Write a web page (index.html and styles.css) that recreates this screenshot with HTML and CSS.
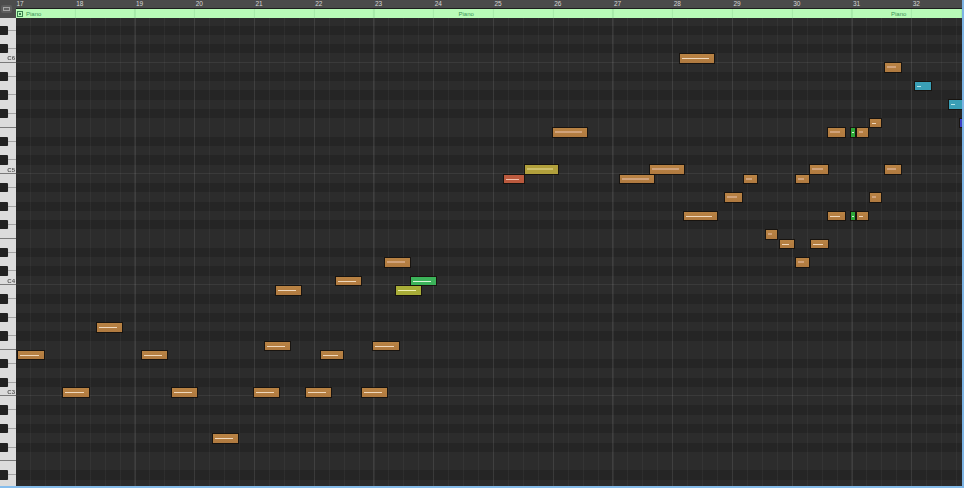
FILE: index.html
```
<!DOCTYPE html>
<html lang="en">
<head>
<meta charset="utf-8">
<title>Piano Roll</title>
<link rel="stylesheet" href="styles.css">
</head>
<body>
<div class="app">
  <header class="top">
    <div class="corner"><div class="corner-icon"></div></div>
    <div class="timeline">
      <div class="ruler">
        <span class="bar">17</span><span class="bar">18</span><span class="bar">19</span><span class="bar">20</span><span class="bar">21</span><span class="bar">22</span><span class="bar">23</span><span class="bar">24</span><span class="bar">25</span><span class="bar">26</span><span class="bar">27</span><span class="bar">28</span><span class="bar">29</span><span class="bar">30</span><span class="bar">31</span><span class="bar">32</span>
      </div>
      <div class="regions">
        <div class="region first"><span class="region-icon"></span><span>Piano</span></div>
        <div class="region"><span>Piano</span></div>
        <div class="region"><span>Piano</span></div>
      </div>
    </div>
  </header>
  <main class="roll">
    <div class="pitches">
      <div class="pitch"><div class="key"></div><div class="lane"></div></div>
      <div class="pitch blk"><div class="key"></div><div class="lane"></div></div>
      <div class="pitch"><div class="key"></div><div class="lane"></div></div>
      <div class="pitch blk"><div class="key"></div><div class="lane"></div></div>
      <div class="pitch oct"><div class="key"><span>C6</span></div><div class="lane"></div></div>
      <div class="pitch"><div class="key"></div><div class="lane"></div></div>
      <div class="pitch blk"><div class="key"></div><div class="lane"></div></div>
      <div class="pitch"><div class="key"></div><div class="lane"></div></div>
      <div class="pitch blk"><div class="key"></div><div class="lane"></div></div>
      <div class="pitch"><div class="key"></div><div class="lane"></div></div>
      <div class="pitch blk"><div class="key"></div><div class="lane"></div></div>
      <div class="pitch fa"><div class="key"></div><div class="lane"></div></div>
      <div class="pitch"><div class="key"></div><div class="lane"></div></div>
      <div class="pitch blk"><div class="key"></div><div class="lane"></div></div>
      <div class="pitch"><div class="key"></div><div class="lane"></div></div>
      <div class="pitch blk"><div class="key"></div><div class="lane"></div></div>
      <div class="pitch oct"><div class="key"><span>C5</span></div><div class="lane"></div></div>
      <div class="pitch"><div class="key"></div><div class="lane"></div></div>
      <div class="pitch blk"><div class="key"></div><div class="lane"></div></div>
      <div class="pitch"><div class="key"></div><div class="lane"></div></div>
      <div class="pitch blk"><div class="key"></div><div class="lane"></div></div>
      <div class="pitch"><div class="key"></div><div class="lane"></div></div>
      <div class="pitch blk"><div class="key"></div><div class="lane"></div></div>
      <div class="pitch fa"><div class="key"></div><div class="lane"></div></div>
      <div class="pitch"><div class="key"></div><div class="lane"></div></div>
      <div class="pitch blk"><div class="key"></div><div class="lane"></div></div>
      <div class="pitch"><div class="key"></div><div class="lane"></div></div>
      <div class="pitch blk"><div class="key"></div><div class="lane"></div></div>
      <div class="pitch oct"><div class="key"><span>C4</span></div><div class="lane"></div></div>
      <div class="pitch"><div class="key"></div><div class="lane"></div></div>
      <div class="pitch blk"><div class="key"></div><div class="lane"></div></div>
      <div class="pitch"><div class="key"></div><div class="lane"></div></div>
      <div class="pitch blk"><div class="key"></div><div class="lane"></div></div>
      <div class="pitch"><div class="key"></div><div class="lane"></div></div>
      <div class="pitch blk"><div class="key"></div><div class="lane"></div></div>
      <div class="pitch fa"><div class="key"></div><div class="lane"></div></div>
      <div class="pitch"><div class="key"></div><div class="lane"></div></div>
      <div class="pitch blk"><div class="key"></div><div class="lane"></div></div>
      <div class="pitch"><div class="key"></div><div class="lane"></div></div>
      <div class="pitch blk"><div class="key"></div><div class="lane"></div></div>
      <div class="pitch oct"><div class="key"><span>C3</span></div><div class="lane"></div></div>
      <div class="pitch"><div class="key"></div><div class="lane"></div></div>
      <div class="pitch blk"><div class="key"></div><div class="lane"></div></div>
      <div class="pitch"><div class="key"></div><div class="lane"></div></div>
      <div class="pitch blk"><div class="key"></div><div class="lane"></div></div>
      <div class="pitch"><div class="key"></div><div class="lane"></div></div>
      <div class="pitch blk"><div class="key"></div><div class="lane"></div></div>
      <div class="pitch fa"><div class="key"></div><div class="lane"></div></div>
      <div class="pitch"><div class="key"></div><div class="lane"></div></div>
      <div class="pitch blk"><div class="key"></div><div class="lane"></div></div>
      <div class="pitch"><div class="key"></div><div class="lane"></div></div>
    </div>
    <div class="gridlines"></div>
    <div class="notes">
      <div class="note" style="--x:680;--r:4;--w:34"></div>
      <div class="note dim" style="--x:885;--r:5;--w:16"></div>
      <div class="note teal short" style="--x:915;--r:7;--w:16"></div>
      <div class="note teal short" style="--x:949;--r:9;--w:16"></div>
      <div class="note blue" style="--x:960;--r:11;--w:6"></div>
      <div class="note" style="--x:870;--r:11;--w:11"></div>
      <div class="note dim" style="--x:553;--r:12;--w:34"></div>
      <div class="note dim" style="--x:828;--r:12;--w:17"></div>
      <div class="note green tiny" style="--x:851;--r:12;--w:4"></div>
      <div class="note dim" style="--x:857;--r:12;--w:11"></div>
      <div class="note dim" style="--x:810;--r:16;--w:18"></div>
      <div class="note dim" style="--x:885;--r:16;--w:16"></div>
      <div class="note gold dim" style="--x:525;--r:16;--w:33"></div>
      <div class="note dim" style="--x:650;--r:16;--w:34"></div>
      <div class="note red" style="--x:504;--r:17;--w:20"></div>
      <div class="note dim" style="--x:620;--r:17;--w:34"></div>
      <div class="note dim" style="--x:744;--r:17;--w:13"></div>
      <div class="note dim" style="--x:796;--r:17;--w:13"></div>
      <div class="note dim" style="--x:725;--r:19;--w:17"></div>
      <div class="note dim" style="--x:870;--r:19;--w:11"></div>
      <div class="note" style="--x:684;--r:21;--w:33"></div>
      <div class="note" style="--x:828;--r:21;--w:17"></div>
      <div class="note green tiny" style="--x:851;--r:21;--w:4"></div>
      <div class="note" style="--x:857;--r:21;--w:11"></div>
      <div class="note dim" style="--x:766;--r:23;--w:11"></div>
      <div class="note" style="--x:780;--r:24;--w:14"></div>
      <div class="note" style="--x:811;--r:24;--w:17"></div>
      <div class="note dim" style="--x:796;--r:26;--w:13"></div>
      <div class="note dim" style="--x:385;--r:26;--w:25"></div>
      <div class="note" style="--x:336;--r:28;--w:25"></div>
      <div class="note green" style="--x:411;--r:28;--w:25"></div>
      <div class="note lime" style="--x:396;--r:29;--w:25"></div>
      <div class="note" style="--x:276;--r:29;--w:25"></div>
      <div class="note" style="--x:97;--r:33;--w:25"></div>
      <div class="note" style="--x:265;--r:35;--w:25"></div>
      <div class="note" style="--x:373;--r:35;--w:26"></div>
      <div class="note" style="--x:18;--r:36;--w:26"></div>
      <div class="note" style="--x:142;--r:36;--w:25"></div>
      <div class="note" style="--x:321;--r:36;--w:22"></div>
      <div class="note" style="--x:63;--r:40;--w:26"></div>
      <div class="note" style="--x:172;--r:40;--w:25"></div>
      <div class="note" style="--x:254;--r:40;--w:25"></div>
      <div class="note" style="--x:306;--r:40;--w:25"></div>
      <div class="note" style="--x:362;--r:40;--w:25"></div>
      <div class="note" style="--x:213;--r:45;--w:25"></div>
    </div>
  </main>
</div>
</body>
</html>
```
FILE: styles.css
```
* { box-sizing: border-box; margin: 0; padding: 0; }
html, body { background: #262626; }
body { width: 964px; height: 488px; overflow: hidden; font-family: "Liberation Sans", Arial, sans-serif; }

.app {
  width: 964px;
  height: 488px;
  display: flex;
  flex-direction: column;
  overflow: hidden;
  border-right: 2px solid #7db4e4;
  border-bottom: 2px solid #86bdec;
  filter: blur(0.35px);
}

/* header */
.top { flex: none; height: 18px; display: flex; }
.corner { flex: none; width: 16px; background: #4c4c4c; padding: 5px 4px 5px 1px; }
.corner-icon { width: 11px; height: 8px; background: #626262; border-radius: 2px; border: 2px solid #5c5c5c; box-shadow: inset 0 0 0 1px #a4a4a4; }
.timeline { flex: 1; min-width: 0; display: flex; flex-direction: column; }
.ruler {
  flex: none;
  height: 9px;
  display: flex;
  padding-left: 0.5px;
  background: #4b4b4b;
  border-bottom: 1px solid #1e1e1e;
  overflow: hidden;
}
.bar { flex: none; width: 59.75px; font-size: 6.5px; line-height: 8px; color: #d6d6d6; }
.regions {
  flex: 1;
  display: flex;
  background:
    repeating-linear-gradient(90deg, rgba(0,90,30,.1) 0 1px, transparent 1px 59.75px) -1.1px 0,
    #b8fbb8;
  overflow: hidden;
}
.region {
  flex: none;
  width: 432.5px;
  padding-left: 10px;
  font-size: 6px;
  line-height: 8px;
  color: #3b9256;
  display: flex;
  align-items: center;
}
.region.first { padding-left: 1px; gap: 3px; }
.region-icon { width: 6px; height: 6px; border: 1px solid #3b7f50; background: linear-gradient(#3b7f50,#3b7f50) center/2px 2px no-repeat; }

/* roll */
.roll { position: relative; flex: 1; min-height: 0; overflow: hidden; }
.pitches { display: flex; flex-direction: column; margin-top: -1.7px; }
.pitch { flex: none; height: 9.28px; display: flex; }
.key {
  position: relative;
  z-index: 3;
  flex: none;
  width: 16px;
  background: #dcdcdc;
}
.key span {
  position: absolute;
  right: 1px;
  top: 2px;
  font-size: 6px;
  line-height: 7px;
  font-weight: 700;
  color: #5a5a5a;
}
.lane { flex: 1; background: #2c2c2c; }
.pitch.blk .lane { background: #252525; }
.pitch.blk .key::before {
  content: "";
  position: absolute;
  left: 0;
  top: 0;
  width: 8px;
  height: 100%;
  background: #222;
  border-radius: 0 1px 1px 0;
  box-shadow: 0 1px 1px rgba(0,0,0,.3);
}
.pitch.blk .key::after {
  content: "";
  position: absolute;
  left: 8px;
  right: 0;
  top: 4px;
  height: 1px;
  background: #a4a4a4;
}
.pitch.oct .key, .pitch.fa .key { box-shadow: inset 0 -1px 0 #7a7a7a; }
.pitch.oct .lane { box-shadow: inset 0 -1px 0 #3a3a3a; }

.gridlines {
  position: absolute;
  inset: 0 0 0 14.9px;
  z-index: 1;
  background:
    repeating-linear-gradient(90deg, rgba(255,255,255,.06) 0 1px, transparent 1px 59.75px),
    repeating-linear-gradient(90deg, rgba(255,255,255,.04) 0 1px, transparent 1px 14.9375px);
}

/* notes: a free canvas where x and pitch row are the content */
.notes { position: absolute; inset: 0; z-index: 2; }
.note {
  position: absolute;
  left: calc(var(--x) * 1px + 0.4px);
  top: calc(var(--r) * 9.28px - 1.2px);
  width: calc(var(--w) * 1px - 0.8px);
  height: 8.6px;
  background: linear-gradient(#b98344, #b07a40);
  box-shadow: 0 0 0 1px rgba(20,15,10,.8);
}
.note::after {
  content: "";
  position: absolute;
  left: 2px;
  right: 5px;
  top: 4px;
  height: 1px;
  background: #f0d8bc;
}
.note.dim::after { top: 3px; height: 2px; background: #d0a27a; }
.note.short::after { right: auto; width: 4px; background: #b6e6ea; }
.note.teal { background: #3a9fb6; }
.note.blue { background: #3f3fc4; }
.note.gold { background: #b1a03c; }
.note.gold.dim::after { background: #cdbf6a; }
.note.red { background: #bb5a3e; }
.note.red::after { background: #f2c0ac; }
.note.green { background: #3cb35a; }
.note.green::after { background: #d8f5d8; }
.note.green.tiny { background: #2da838; }
.note.tiny::after { left: 1px; right: 1px; }
.note.lime { background: #a8ad38; }
.note.lime::after { background: #eef0b0; }
```
